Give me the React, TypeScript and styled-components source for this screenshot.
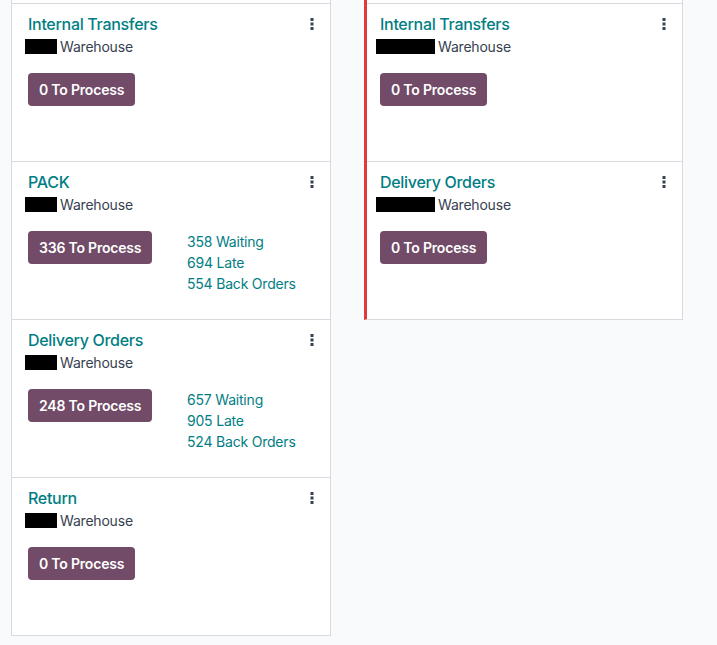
import React from 'react';
import styled, { createGlobalStyle } from 'styled-components';

interface PickingType {
  name: string;
  redactWidth: number;
  toProcess: number;
  waiting?: number;
  late?: number;
  backOrders?: number;
}

const GlobalStyle = createGlobalStyle`
  body {
    margin: 0;
    background: #f9fafb;
    font-family: Inter, Roboto, "Liberation Sans", sans-serif;
    color: #374151;
    letter-spacing: -0.2px;
  }
`;

const Board = styled.main`
  display: grid;
  grid-template-columns: 320px 319px;
  column-gap: 33px;
  align-items: start;
  padding-left: 11px;
`;

const Column = styled.section<{ $highlight?: boolean }>`
  display: flex;
  flex-direction: column;
  background: #fff;
  border: 1px solid #d8dadd;
  border-top: none;
  border-left: ${(p) => (p.$highlight ? '3px solid #e0393e' : '1px solid #d8dadd')};
  padding-top: 3px;
`;

const Card = styled.article<{ $highlight?: boolean }>`
  position: relative;
  height: 158px;
  box-sizing: border-box;
  border-top: 1px solid #d8dadd;
  padding: 8px 16px 0 ${(p) => (p.$highlight ? '13px' : '16px')};
`;

const Title = styled.a`
  display: block;
  font-size: 16px;
  line-height: 24px;
  font-weight: 500;
  letter-spacing: -0.3px;
  color: #017e84;
  text-decoration: none;
  cursor: pointer;
`;

const Subtitle = styled.div`
  display: flex;
  align-items: center;
  font-size: 14px;
  line-height: 21px;
  color: #374151;
`;

const Redacted = styled.span<{ $width: number; $shift: number }>`
  display: inline-block;
  width: ${(p) => p.$width}px;
  height: 15px;
  margin-left: -${(p) => p.$shift}px;
  margin-right: 3px;
  background: #000;
`;

const MenuButton = styled.button`
  position: absolute;
  top: 14px;
  right: 16px;
  padding: 0;
  border: none;
  background: transparent;
  display: flex;
  cursor: pointer;
`;

const Body = styled.div`
  display: grid;
  grid-template-columns: 1fr 1fr;
  margin-top: 16px;
`;

const ProcessButton = styled.button`
  justify-self: start;
  height: 33px;
  padding: 0 11px;
  border: none;
  border-radius: 4px;
  background: #714b67;
  color: #fff;
  font-family: inherit;
  font-size: 14px;
  font-weight: 600;
  letter-spacing: -0.2px;
  cursor: pointer;
`;

const Stats = styled.div`
  display: flex;
  flex-direction: column;
  padding-left: 16px;
`;

const StatLink = styled.a`
  font-size: 14px;
  line-height: 21px;
  color: #017e84;
  text-decoration: none;
  cursor: pointer;
`;

const DotsIcon = () => (
  <svg width="4" height="12" viewBox="0 0 4 12" fill="#374151">
    <rect x="0.5" y="0" width="3" height="3" />
    <rect x="0.5" y="4.5" width="3" height="3" />
    <rect x="0.5" y="9" width="3" height="3" />
  </svg>
);

const leftColumn: PickingType[] = [
  { name: 'Internal Transfers', redactWidth: 32, toProcess: 0 },
  { name: 'PACK', redactWidth: 32, toProcess: 336, waiting: 358, late: 694, backOrders: 554 },
  { name: 'Delivery Orders', redactWidth: 32, toProcess: 248, waiting: 657, late: 905, backOrders: 524 },
  { name: 'Return', redactWidth: 32, toProcess: 0 },
];

const rightColumn: PickingType[] = [
  { name: 'Internal Transfers', redactWidth: 59, toProcess: 0 },
  { name: 'Delivery Orders', redactWidth: 59, toProcess: 0 },
];

const PickingCard: React.FC<{ item: PickingType; highlight?: boolean }> = ({ item, highlight }) => (
  <Card $highlight={highlight}>
    <Title>{item.name}</Title>
    <Subtitle>
      <Redacted $width={item.redactWidth} $shift={highlight ? 4 : 3} />
      Warehouse
    </Subtitle>
    <MenuButton aria-label="Dropdown menu">
      <DotsIcon />
    </MenuButton>
    <Body>
      <ProcessButton>{item.toProcess} To Process</ProcessButton>
      {item.waiting !== undefined && (
        <Stats>
          <StatLink>{item.waiting} Waiting</StatLink>
          <StatLink>{item.late} Late</StatLink>
          <StatLink>{item.backOrders} Back Orders</StatLink>
        </Stats>
      )}
    </Body>
  </Card>
);

const App: React.FC = () => (
  <>
    <GlobalStyle />
    <Board>
      <Column>
        {leftColumn.map((item, i) => (
          <PickingCard key={i} item={item} />
        ))}
      </Column>
      <Column $highlight>
        {rightColumn.map((item, i) => (
          <PickingCard key={i} item={item} highlight />
        ))}
      </Column>
    </Board>
  </>
);

export default App;
